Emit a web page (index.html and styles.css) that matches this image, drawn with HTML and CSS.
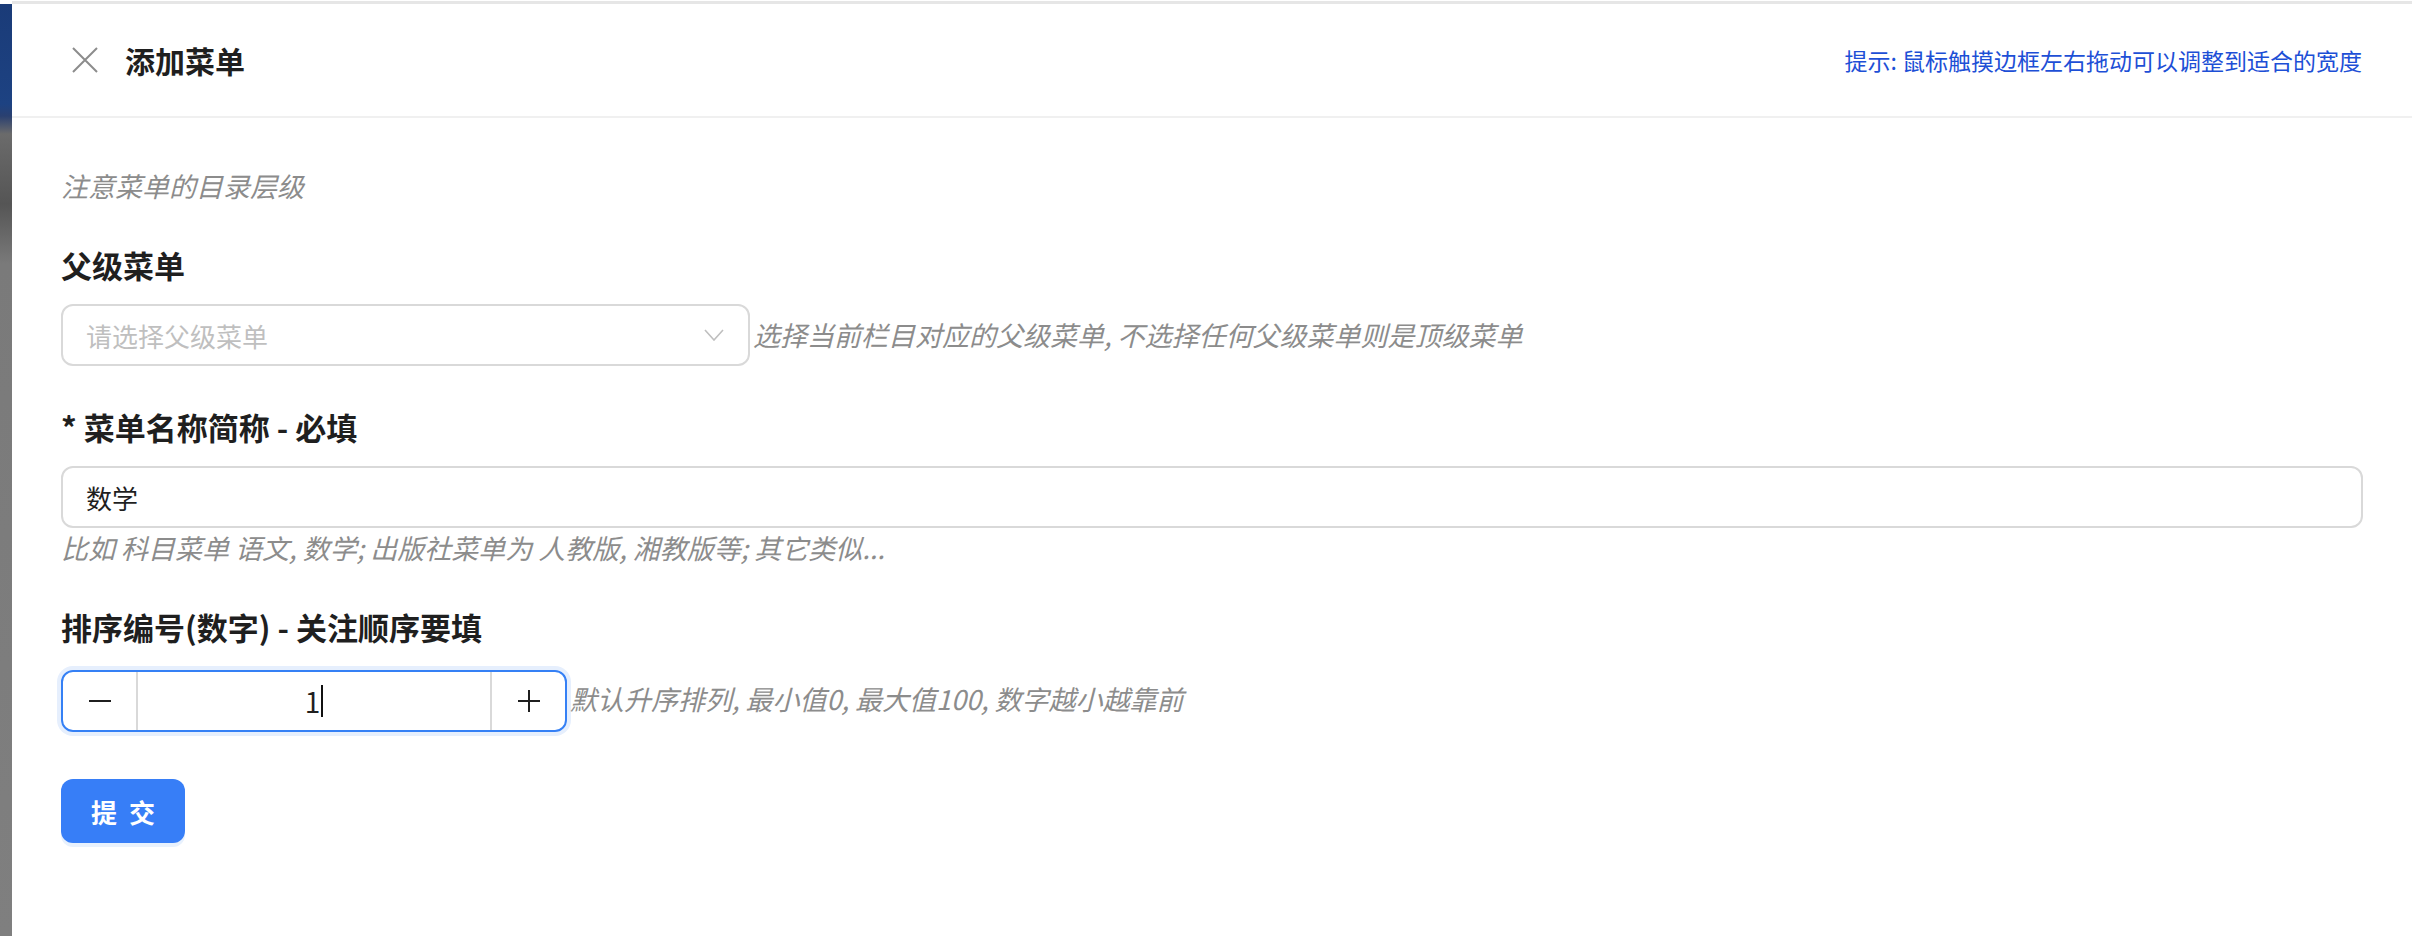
FILE: index.html
```html
<!DOCTYPE html>
<html lang="zh-CN">
<head>
    <meta charset="UTF-8">
    <meta name="viewport" content="width=device-width, initial-scale=1.0">
    <title>添加菜单</title>
    <link rel="stylesheet" href="styles.css">
</head>
<body>
    <div class="page">
        <!-- dimmed page behind the drawer -->
        <div class="backdrop"></div>

        <div class="drawer">
            <header class="drawer-header">
                <button class="close-btn" aria-label="关闭">
                    <svg width="26" height="26" viewBox="0 0 26 26">
                        <path d="M1 1 L25 25 M25 1 L1 25" stroke="#8c8c8c" stroke-width="2" fill="none"/>
                    </svg>
                </button>
                <h2 class="drawer-title">添加菜单</h2>
                <span class="drawer-tip">提示: 鼠标触摸边框左右拖动可以调整到适合的宽度</span>
            </header>

            <div class="drawer-body">
                <p class="note">注意菜单的目录层级</p>

                <!-- Parent menu -->
                <div class="form-item">
                    <label class="form-label">父级菜单</label>
                    <div class="control-row">
                        <div class="select">
                            <span class="placeholder">请选择父级菜单</span>
                            <svg class="arrow" width="20" height="12" viewBox="0 0 20 12">
                                <path d="M1 1 L10 11 L19 1" stroke="#bfbfbf" stroke-width="1.6" fill="none"/>
                            </svg>
                        </div>
                        <span class="extra">选择当前栏目对应的父级菜单, 不选择任何父级菜单则是顶级菜单</span>
                    </div>
                </div>

                <!-- Menu name -->
                <div class="form-item">
                    <label class="form-label">* 菜单名称简称 - 必填</label>
                    <div class="text-input">数学</div>
                    <div class="extra block">比如 科目菜单 语文, 数学; 出版社菜单为 人教版, 湘教版等; 其它类似...</div>
                </div>

                <!-- Sort number -->
                <div class="form-item">
                    <label class="form-label">排序编号(数字) - 关注顺序要填</label>
                    <div class="control-row">
                        <div class="number-input">
                            <span class="step">
                                <svg width="24" height="24" viewBox="0 0 24 24"><path d="M1 12 H23" stroke="#1f1f1f" stroke-width="2"/></svg>
                            </span>
                            <span class="number-value">1<span class="caret"></span></span>
                            <span class="step">
                                <svg width="24" height="24" viewBox="0 0 24 24"><path d="M1 12 H23 M12 1 V23" stroke="#1f1f1f" stroke-width="2"/></svg>
                            </span>
                        </div>
                        <span class="extra">默认升序排列, 最小值0, 最大值100, 数字越小越靠前</span>
                    </div>
                </div>

                <button class="submit-btn">提 交</button>
            </div>
        </div>
    </div>
</body>
</html>
```

FILE: styles.css
```css
body {
    margin: 0;
    font-family: "Noto Sans CJK SC", "Noto Sans", sans-serif;
    background: #fff;
}
.page {
    display: flex;
    height: 936px;
    overflow: hidden;
}
.backdrop {
    width: 12px;
    flex-shrink: 0;
    margin-top: 4px;
    background: linear-gradient(to bottom, #1a3b78 0, #1d4282 100px, #2a4070 112px, #6b6b6b 130px, #555 200px, #7a7a7a 260px, #7f7f7f 100%);
}
.drawer {
    flex: 1;
    display: flex;
    flex-direction: column;
    margin-top: 1px;
    border-top: 3px solid #e6e6e6;
}
.drawer-header {
    display: flex;
    align-items: center;
    height: 112px;
    padding: 0 50px 0 59px;
    border-bottom: 2px solid #f0f0f0;
}
.close-btn {
    width: 28px;
    height: 28px;
    padding: 0;
    border: none;
    background: none;
    display: flex;
    align-items: center;
    justify-content: center;
    margin-right: 26px;
}
.drawer-title {
    margin: 0;
    font-size: 30px;
    font-weight: 700;
    color: #1f1f1f;
    flex: 1;
}
.drawer-tip {
    font-size: 23px;
    color: #1d4fd6;
}
.drawer-body {
    padding: 50px 49px 0 49px;
}
.note {
    margin: 0 0 41px;
    font-size: 27px;
    line-height: 36px;
    font-style: italic;
    color: #8c8c8c;
}
.form-item {
    margin-bottom: 41px;
}
.form-label {
    display: block;
    font-size: 31px;
    line-height: 40px;
    font-weight: 700;
    color: #1f1f1f;
    margin-bottom: 19px;
}
.control-row {
    display: flex;
    align-items: center;
}
.select {
    width: 689px;
    height: 62px;
    box-sizing: border-box;
    border: 2px solid #d9d9d9;
    border-radius: 12px;
    display: flex;
    align-items: center;
    padding: 0 24px 0 23px;
}
.placeholder {
    flex: 1;
    font-size: 26px;
    color: #bfbfbf;
}
.arrow {
    display: block;
}
.extra {
    font-size: 27px;
    line-height: 36px;
    font-style: italic;
    color: #8c8c8c;
    margin-left: 3px;
}
.extra.block {
    margin: 2px 0 0;
}
.text-input {
    height: 62px;
    box-sizing: border-box;
    border: 2px solid #d9d9d9;
    border-radius: 12px;
    padding: 0 23px;
    display: flex;
    align-items: center;
    font-size: 26px;
    color: #1f1f1f;
}
.number-input {
    width: 506px;
    height: 62px;
    margin-top: 4px;
    box-sizing: border-box;
    border: 2px solid #3580f5;
    border-radius: 12px;
    box-shadow: 0 0 0 4px #e6effd;
    display: flex;
    align-items: stretch;
}
.step {
    width: 73px;
    display: flex;
    align-items: center;
    justify-content: center;
}
.step:first-child {
    border-right: 2px solid #d9d9d9;
}
.step:last-child {
    border-left: 2px solid #d9d9d9;
}
.number-value {
    flex: 1;
    display: flex;
    align-items: center;
    justify-content: center;
    font-size: 28px;
    color: #1f1f1f;
}
.caret {
    display: inline-block;
    width: 2px;
    height: 32px;
    background: #111;
    margin-left: 1px;
}
.submit-btn {
    margin-top: 6px;
    width: 124px;
    height: 64px;
    border: none;
    border-radius: 12px;
    background: #377ef7;
    color: #fff;
    font-family: "Noto Sans CJK SC", sans-serif;
    font-size: 26px;
    font-weight: 700;
    letter-spacing: 3px;
    text-indent: 3px;
    box-shadow: 0 4px 0 #e8f1fd;
    cursor: pointer;
}
```
